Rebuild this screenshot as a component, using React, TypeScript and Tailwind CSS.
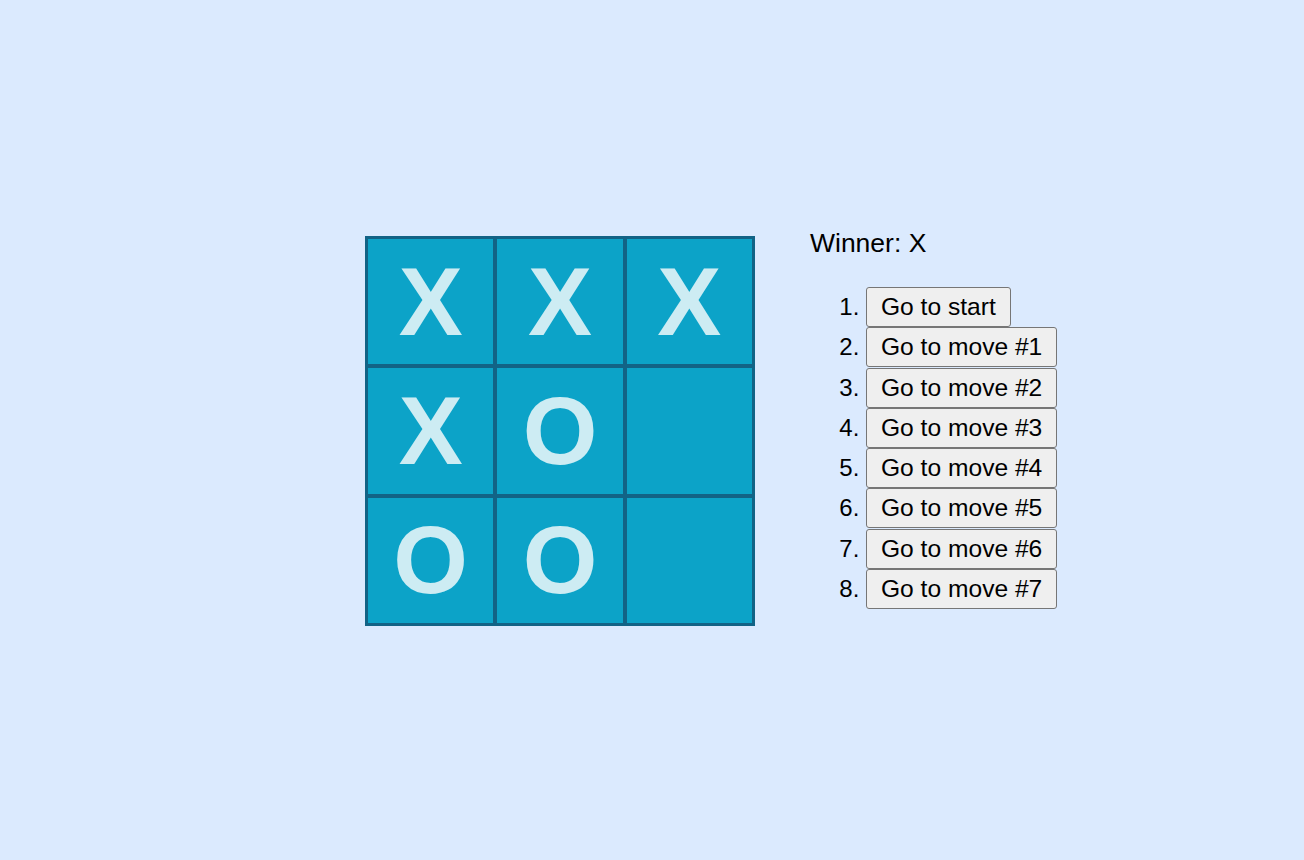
const squares = ["X", "X", "X", "X", "O", null, "O", "O", null];

const moves = [
  "Go to start",
  "Go to move #1",
  "Go to move #2",
  "Go to move #3",
  "Go to move #4",
  "Go to move #5",
  "Go to move #6",
  "Go to move #7",
];

function Square({ value }: { value: string | null }) {
  return (
    <button className="flex h-[125.33px] w-[125.33px] items-center justify-center bg-[#0ca3c8] p-0 font-['Liberation_Sans',Arial,sans-serif] text-[96px] leading-none font-bold text-[#cdecf3]">
      {value}
    </button>
  );
}

export default function App() {
  return (
    <div className="flex h-screen w-full items-center bg-[#dbeafe] pt-[2px] pl-[365px] font-['Liberation_Sans',Arial,sans-serif] text-black">
      <div className="flex items-start gap-[55px]">
        <div className="grid grid-cols-3 gap-[4px] bg-[#126386] p-[3px]">
          {squares.map((v, i) => (
            <Square key={i} value={v} />
          ))}
        </div>
        <div className="-mt-[8px]">
          <div className="text-[26.5px] leading-[31px]">Winner: X</div>
          <ol className="mt-[28px] list-decimal pl-[56px] text-[24px]">
            {moves.map((m) => (
              <li key={m} className="h-[40.3px] leading-[40px]">
                <button className="h-10 rounded-[3px] border border-[#767676] bg-[#efefef] px-[14px] align-top text-[24.6px] leading-[38px] whitespace-nowrap text-black">
                  {m}
                </button>
              </li>
            ))}
          </ol>
        </div>
      </div>
    </div>
  );
}
